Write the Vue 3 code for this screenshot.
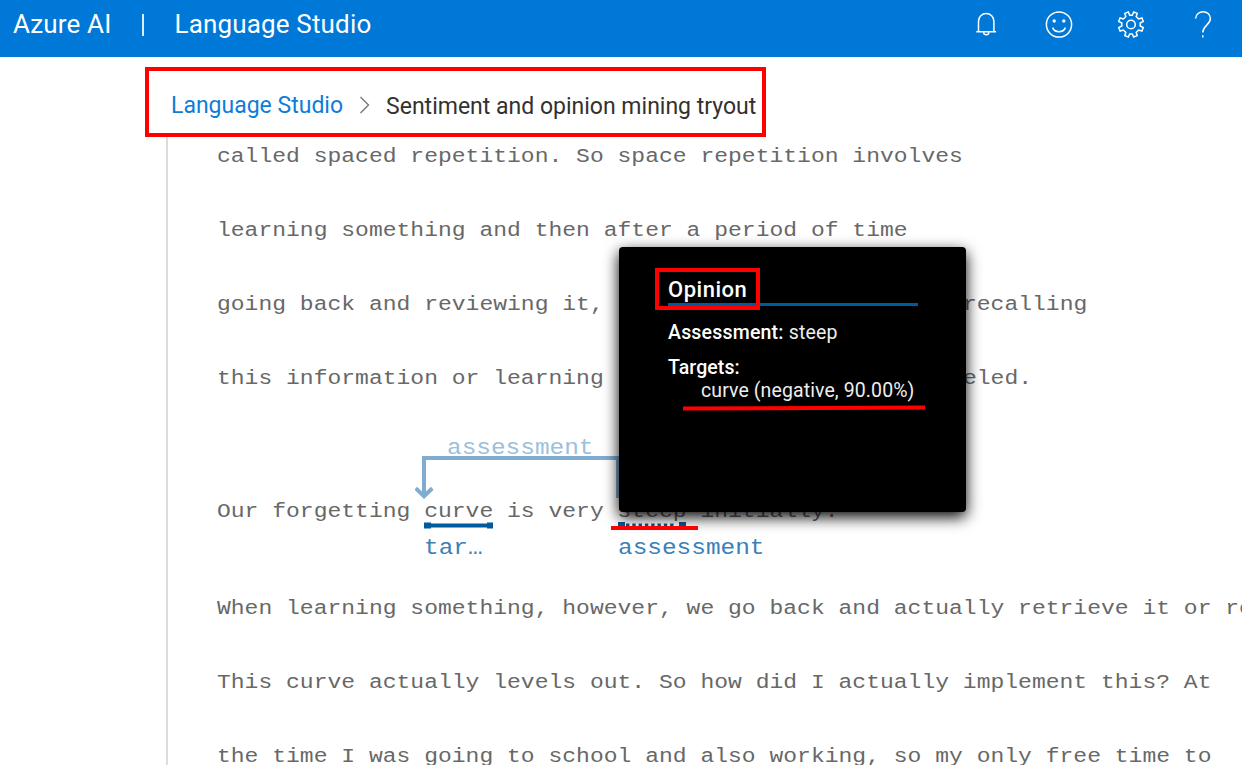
<script setup>
const opening = [
  'called spaced repetition. So space repetition involves',
  'learning something and then after a period of time',
  ['going back and reviewing it, ', 'recalling'],
  ['this information or learning ', 'eled.']
]
const closing = [
  'When learning something, however, we go back and actually retrieve it or re',
  'This curve actually levels out. So how did I actually implement this? At',
  'the time I was going to school and also working, so my only free time to'
]
const dots = [0, 1, 2, 3, 4, 5, 6, 7]
</script>

<template>
  <div class="page">
    <header class="bar">
      <div class="brand">
        <span>Azure AI</span><span class="divider"></span><span>Language Studio</span>
      </div>
      <nav class="tools">
        <svg width="28" height="30" viewBox="0 0 28 30">
          <path d="M6.5 21.5V11.2a7.7 7.7 0 0 1 15.4 0v10.3M4.3 21.7h19.8M11.6 22.2c.2 3.5 5 3.5 5.2 0" />
        </svg>
        <svg width="28" height="30" viewBox="0 0 28 30">
          <circle cx="14" cy="14.5" r="12.6" />
          <path d="M7.6 17.6c2.2 5.4 10.6 5.4 12.8 0" />
          <circle class="fill" cx="9.2" cy="11" r="1.7" /><circle class="fill" cx="18.8" cy="11" r="1.7" />
        </svg>
        <svg width="28" height="30" viewBox="0 0 28 30">
          <circle cx="14" cy="14.5" r="4.3" />
          <path d="M12.7 5.2 11.3 2 7.8 3.4 8.8 6.6 6.4 9 3.1 8 1.7 11.3 4.8 13 4.8 16 1.7 17.7 3.1 21 6.4 20 8.8 22.4 7.8 25.6 11.3 27 12.7 24H15.3L16.7 27 20.2 25.6 19.2 22.4 21.6 20 24.9 21 26.3 17.7 23.2 16 23.2 13 26.3 11.3 24.9 8 21.6 9 19.2 6.6 20.2 3.4 16.7 2 15.3 5.2Z" />
        </svg>
        <svg width="28" height="30" viewBox="0 0 28 30">
          <path d="M6.6 8.6C6.9-.5 21.4-.4 21.4 8.6c0 6.6-7.6 6.6-7.6 13.9" />
          <path d="M13.8 25.2v2.2" />
        </svg>
      </nav>
    </header>

    <div class="crumbs">
      <span class="link">Language Studio</span>
      <svg class="chevron" width="12" height="18" viewBox="0 0 12 18"><path d="M1.5 1 9.5 9 1.5 17" /></svg>
      <span class="here">Sentiment and opinion mining tryout</span>
    </div>

    <main class="doc">
      <p v-for="(line, i) in opening" :key="i" class="line">
        <template v-if="Array.isArray(line)"><span class="lead">{{ line[0] }}</span><span>{{ line[1] }}</span></template>
        <template v-else>{{ line }}</template>
      </p>
      <section class="annotated">
        <div class="relation">assessment</div>
        <svg class="arrow" width="210" height="44" viewBox="0 0 210 44">
          <path d="M9 41V2H203V42" /><path d="M.7 32.2 9 40.2 17.3 32.2" />
        </svg>
        <p class="sentence">Our forgetting curve is very steep initially.</p>
        <div class="marks">
          <svg width="70" height="7" viewBox="0 0 70 7">
            <path d="M0 .5h7v1h56v-1h6v6h-6v-1h-56v1h-7z" />
          </svg>
          <svg width="70" height="7" viewBox="0 0 70 7">
            <path d="M0 0h7v6h-7zM61 0h7v6h-7z" />
            <rect v-for="d in dots" :key="d" :x="8 + d * 6.3" y="1.5" width="3.4" height="4" />
          </svg>
        </div>
        <div class="labels"><span>tar…</span><span>assessment</span></div>
      </section>
      <p v-for="line in closing" :key="line" class="line">{{ line }}</p>
    </main>

    <aside class="card">
      <h2><span>Opinion</span></h2>
      <p class="assess"><b>Assessment:</b> steep</p>
      <p class="targets"><b>Targets:</b></p>
      <p class="value">curve (negative, 90.00%)</p>
    </aside>
    <div class="outline"></div>
    <svg class="stroke target-stroke" width="242" height="6" viewBox="0 0 242 6"><path d="M0 3.6 242 2.4" /></svg>
    <svg class="stroke word-stroke" width="87" height="6" viewBox="0 0 87 6"><path d="M0 3H87" /></svg>
  </div>
</template>

<style>
body { overflow: hidden; background: #fff; }
</style>

<style scoped>
.page { position: relative; width: 1242px; height: 765px; overflow: hidden; background: #fff; font-family: Roboto, sans-serif; }
p, h2 { margin: 0; }
.bar { box-sizing: border-box; height: 57px; padding: 0 25px 9px 13px; background: #0078d7; color: #fff; display: flex; align-items: center; justify-content: space-between; }
.brand { display: flex; align-items: center; font-size: 26px; line-height: 40px; white-space: nowrap; letter-spacing: .16px; }
.divider { width: 2px; height: 22px; margin: 1px 30px 0 31px; background: #dcecfa; }
.tools { display: flex; gap: 44.2px; padding-top: 1px; }
.tools svg { fill: none; stroke: #fff; stroke-width: 1.5; }
.tools .fill { fill: #fff; stroke: none; }
.crumbs { box-sizing: border-box; width: 621px; height: 70px; margin: 10px 0 0 145px; padding-left: 22px; border: 4px solid #f00; display: flex; align-items: center; font-size: 23px; white-space: nowrap; }
.link { color: #0f7cd8; margin-top: 6px; }
.chevron { margin: 6px 15px 0 16px; fill: none; stroke: #777; stroke-width: 1.4; }
.here { color: #323130; margin-top: 8px; }
.doc { margin-left: 166px; border-left: 2px solid #dcdcdc; height: 628px; padding-left: 49px; font-family: "Courier New", "Liberation Mono", monospace; font-size: 23px; color: #686868; white-space: pre; letter-spacing: .01px; }
.line { display: flex; height: 74px; line-height: 74px; position: relative; top: -17px; transform: scaleY(.9); }
.lead { width: 746px; }
.annotated { display: flex; flex-direction: column; height: 156px; }
.relation { margin: 4px 0 0 230px; height: 24px; line-height: 24px; font-size: 24.4px; color: #9cbfdc; transform: scaleY(.9); }
.arrow { margin: -5px 0 0 198px; fill: none; stroke: #80acd0; stroke-width: 4; flex: none; }
.sentence { height: 24px; line-height: 24px; transform: scaleY(.9); }
.marks { display: flex; gap: 124px; margin-top: -2px; padding-left: 207px; height: 7px; fill: #005a9e; }
.labels { display: flex; margin: 6px 0 0 207px; line-height: 28px; font-size: 24.4px; color: #3c80b7; transform: scaleY(.9); }
.labels span:first-child { width: 194px; }
.card { position: absolute; left: 619px; top: 247px; box-sizing: border-box; width: 347px; height: 265px; padding: 27px 48px 0 49px; border-radius: 4px; background: #000; color: #fff; box-shadow: 0 5px 15px #000; font-size: 19.5px; line-height: 23px; white-space: nowrap; letter-spacing: .1px; }
.card h2 { height: 29px; border-bottom: 3px solid #005a9e; font-size: 22px; line-height: 31px; font-weight: 500; letter-spacing: .5px; }
.card b { font-weight: 500; }
.assess { margin-top: 15px; color: #eee; letter-spacing: .2px; }
.assess b { color: #fff; }
.targets { margin-top: 12px; }
.value { padding-left: 33px; color: #eee; }
.outline { position: absolute; left: 655px; top: 268px; box-sizing: border-box; width: 105px; height: 42px; border: 4px solid #f00; }
.stroke { position: absolute; stroke: #f00; stroke-width: 4; }
.target-stroke { left: 683px; top: 405px; }
.word-stroke { left: 611px; top: 525px; }
</style>
